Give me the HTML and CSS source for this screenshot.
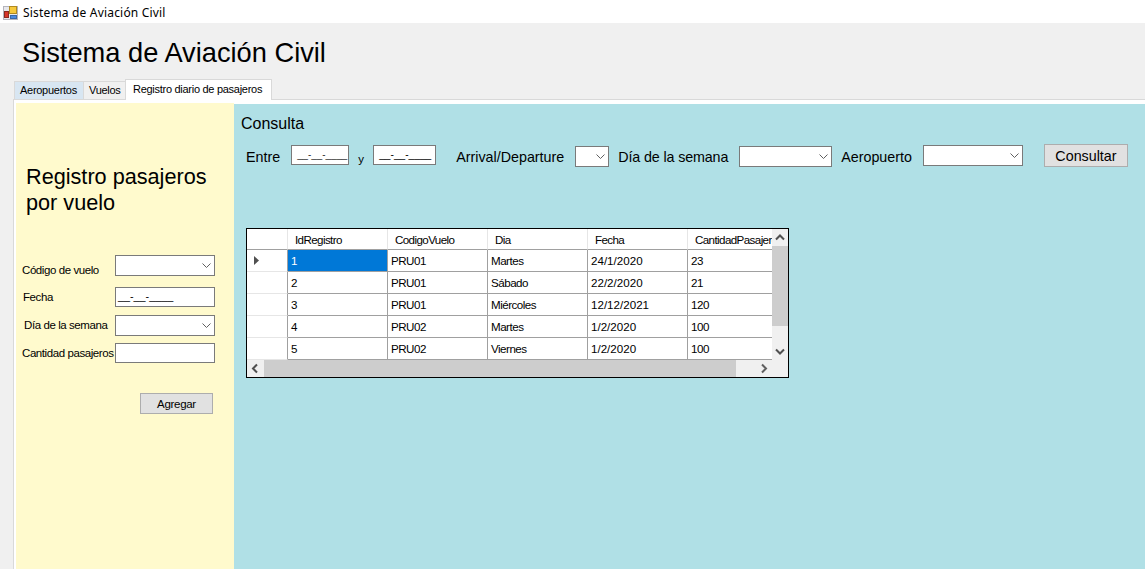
FILE: index.html
```html
<!DOCTYPE html>
<html lang="es">
<head>
<meta charset="UTF-8">
<title>Sistema de Aviación Civil</title>
<link rel="stylesheet" href="styles.css">
</head>
<body>
<div class="titlebar">
    <svg class="appicon" width="16" height="16" viewBox="0 0 16 16">
        <rect x="0.5" y="1.5" width="14" height="13" fill="#e8e8ec" stroke="#b4b4bc"/>
        <rect x="6.5" y="1.5" width="7" height="7" fill="#f6c93c" stroke="#b08a20"/>
        <rect x="1.5" y="6.5" width="4" height="6" fill="#d8362a" stroke="#8a2a20"/>
        <rect x="7.5" y="10.5" width="6" height="3" fill="#4a8ae0" stroke="#3a68a8"/>
    </svg>
    <span>Sistema de Aviación Civil</span>
</div>
<h1 class="apptitle">Sistema de Aviación Civil</h1>
<div class="tabs">
    <div class="tab tab-blue">Aeropuertos</div>
    <div class="tab tab-vuelos">Vuelos</div>
    <div class="tab tab-active">Registro diario de pasajeros</div>
</div>
<div class="panel">
    <div class="side">
        <h2 class="side-title">Registro pasajeros<br>por vuelo</h2>
        <div class="side-form">
            <div class="side-row row-a"><label class="lbl lbl-codigo">Código de vuelo</label><div class="combo side-field"><svg class="chev" width="9" height="5" viewBox="0 0 9 5"><path d="M0.5 0.5L4.5 4.5L8.5 0.5" fill="none" stroke="#606060"/></svg></div></div>
            <div class="side-row row-b"><label class="lbl lbl-fecha">Fecha</label><div class="field side-field mask">__-__-____</div></div>
            <div class="side-row row-c"><label class="lbl lbl-dia">Día de la semana</label><div class="combo side-field"><svg class="chev" width="9" height="5" viewBox="0 0 9 5"><path d="M0.5 0.5L4.5 4.5L8.5 0.5" fill="none" stroke="#606060"/></svg></div></div>
            <div class="side-row row-d"><label class="lbl">Cantidad pasajeros</label><div class="field side-field"></div></div>
        </div>
        <button class="btn btn-add">Agregar</button>
    </div>
    <div class="main">
        <div class="main-title">Consulta</div>
        <div class="filters">
            <span class="f-entre">Entre</span>
            <div class="field date1 mask">__-__-____</div>
            <span class="f-y">y</span>
            <div class="field date2 mask">__-__-____</div>
            <span class="f-arrival">Arrival/Departure</span>
            <div class="combo c-arrival"><svg class="chev" width="9" height="5" viewBox="0 0 9 5"><path d="M0.5 0.5L4.5 4.5L8.5 0.5" fill="none" stroke="#606060"/></svg></div>
            <span class="f-dia">Día de la semana</span>
            <div class="combo c-dia"><svg class="chev" width="9" height="5" viewBox="0 0 9 5"><path d="M0.5 0.5L4.5 4.5L8.5 0.5" fill="none" stroke="#606060"/></svg></div>
            <span class="f-aero">Aeropuerto</span>
            <div class="combo c-aero"><svg class="chev" width="9" height="5" viewBox="0 0 9 5"><path d="M0.5 0.5L4.5 4.5L8.5 0.5" fill="none" stroke="#606060"/></svg></div>
            <button class="btn btn-query">Consultar</button>
        </div>
        <div class="grid">
            <div class="grid-top">
                <div class="grid-view">
                    <table>
                        <tr><th class="rowhead"></th><th>IdRegistro</th><th>CodigoVuelo</th><th>Dia</th><th>Fecha</th><th>CantidadPasajeros</th></tr>
                        <tr><td class="rowhead"><svg width="5" height="9" viewBox="0 0 5 9"><path d="M0 0L5 4.5L0 9Z" fill="#505050"/></svg></td><td class="selected">1</td><td>PRU01</td><td>Martes</td><td class="num">24/1/2020</td><td>23</td></tr>
                        <tr><td class="rowhead"></td><td>2</td><td>PRU01</td><td>Sábado</td><td class="num">22/2/2020</td><td>21</td></tr>
                        <tr><td class="rowhead"></td><td>3</td><td>PRU01</td><td>Miércoles</td><td class="num">12/12/2021</td><td>120</td></tr>
                        <tr><td class="rowhead"></td><td>4</td><td>PRU02</td><td>Martes</td><td class="num">1/2/2020</td><td>100</td></tr>
                        <tr><td class="rowhead"></td><td>5</td><td>PRU02</td><td>Viernes</td><td class="num">1/2/2020</td><td>100</td></tr>
                    </table>
                </div>
                <div class="vbar">
                    <svg class="arrow" width="16" height="17" viewBox="0 0 16 17"><path d="M4 10.5L8 6.5L12 10.5" fill="none" stroke="#505050" stroke-width="2"/></svg>
                    <div class="vtrack"><div class="vthumb"></div></div>
                    <svg class="arrow" width="16" height="17" viewBox="0 0 16 17"><path d="M4 6.5L8 10.5L12 6.5" fill="none" stroke="#505050" stroke-width="2"/></svg>
                </div>
            </div>
            <div class="hbar">
                <svg class="arrow" width="17" height="17" viewBox="0 0 17 17"><path d="M10 4.5L6 8.5L10 12.5" fill="none" stroke="#505050" stroke-width="2"/></svg>
                <div class="htrack"><div class="hthumb"></div></div>
                <svg class="arrow" width="17" height="17" viewBox="0 0 17 17"><path d="M7 4.5L11 8.5L7 12.5" fill="none" stroke="#606060" stroke-width="2"/></svg>
                <div class="corner"></div>
            </div>
        </div>
    </div>
</div>
</body>
</html>
```

FILE: styles.css
```css
html, body {
    margin: 0;
    height: 100%;
    overflow: hidden;
}
body {
    background-color: #f0f0f0;
    font-family: "Liberation Sans", Arial, sans-serif;
    color: #000;
    display: flex;
    flex-direction: column;
}
.titlebar {
    box-sizing: border-box;
    height: 23px;
    background-color: #fff;
    display: flex;
    align-items: center;
    font-family: "Noto Sans", "Liberation Sans", sans-serif;
    font-size: 12px;
    padding: 2px 0 0 3px;
    flex: none;
}
.titlebar span {
    margin-left: 4px;
    letter-spacing: 0.18px;
}
.appicon {
    flex: none;
}
.apptitle {
    margin: 0;
    padding: 15px 0 0 22px;
    height: 41px;
    font-size: 27.25px;
    line-height: 30px;
    font-weight: normal;
    flex: none;
}
.tabs {
    display: flex;
    align-items: flex-end;
    height: 20px;
    padding-left: 14px;
    font-size: 11px;
    letter-spacing: -0.28px;
    position: relative;
    z-index: 1;
    flex: none;
}
.tab {
    box-sizing: border-box;
    height: 18px;
    line-height: 17px;
    border: 1px solid #d9d9d9;
    border-bottom: 0;
    background-color: #f0f0f0;
    white-space: nowrap;
}
.tab-blue {
    width: 70px;
    padding-left: 5px;
    background-color: #d8e6f2;
}
.tab-vuelos {
    width: 43px;
    margin-left: -1px;
    padding-left: 5px;
}
.tab-active {
    width: 147px;
    height: 21px;
    line-height: 18px;
    margin-left: -1px;
    margin-bottom: -1px;
    padding-left: 7px;
    background-color: #fff;
}
.panel {
    flex: 1;
    display: flex;
    margin-left: 13px;
    background-color: #fff;
    border-left: 1px solid #d9d9d9;
    border-top: 1px solid #d9d9d9;
    padding: 3px 0 0 2px;
    min-height: 0;
}
.side {
    width: 218px;
    background-color: #fffacd;
    flex: none;
    font-size: 12px;
}
.side-title {
    margin: 0;
    padding: 61px 0 0 10px;
    font-size: 21.66px;
    line-height: 26px;
    font-weight: normal;
}
.side-form {
    margin-top: 39px;
    display: flex;
    flex-direction: column;
}
.side-row {
    display: flex;
    align-items: flex-start;
    padding-left: 6px;
}
.row-a { height: 21px; margin-bottom: 11px; }
.row-b { height: 20px; margin-bottom: 8px; }
.row-c { height: 21px; margin-bottom: 7px; }
.row-d { height: 20px; }
.lbl {
    box-sizing: border-box;
    width: 93px;
    flex: none;
    margin-top: 3px;
    line-height: 14px;
    white-space: nowrap;
    font-size: 11.5px;
    letter-spacing: -0.42px;
}
.lbl-codigo { margin-top: 8px; }
.lbl-fecha { padding-left: 1px; }
.lbl-dia { padding-left: 2px; }
.side-field {
    width: 100px;
}
.field, .combo {
    box-sizing: border-box;
    background-color: #fff;
    border: 1px solid #7a7a7a;
    flex: none;
}
.field {
    height: 20px;
}
.combo {
    height: 21px;
    display: flex;
    align-items: center;
    justify-content: flex-end;
    padding-right: 3px;
}
.mask {
    font-size: 10.8px;
    line-height: 17px;
    padding-left: 2px;
    white-space: nowrap;
    overflow: hidden;
}
.btn {
    box-sizing: border-box;
    font-family: inherit;
    background-color: #e1e1e1;
    border: 1px solid #adadad;
    padding: 0;
    color: #000;
}
.btn-add {
    display: block;
    margin: 30px 0 0 124px;
    width: 73px;
    height: 21px;
    font-size: 11.5px;
    letter-spacing: -0.3px;
}
.main {
    flex: 1;
    background-color: #b0e0e6;
    margin-top: 1px;
    min-width: 0;
    font-size: 14.3px;
}
.main-title {
    padding: 10px 0 0 7px;
    font-size: 16px;
    line-height: 20px;
}
.filters {
    display: flex;
    align-items: center;
    height: 23px;
    margin-top: 11px;
    padding-left: 12px;
    white-space: nowrap;
}
.date1 { width: 58px; margin-left: 11px; margin-bottom: 3px; font-size: 9.8px; padding-left: 5px; }
.f-y { width: 6px; margin-left: 9px; font-size: 11.5px; margin-top: 4px; }
.date2 { width: 63px; margin-left: 9px; margin-bottom: 3px; font-size: 10.2px; padding-left: 5px; }
.f-arrival { margin-left: 20px; }
.c-arrival { width: 34px; margin-left: 11px; }
.f-dia { margin-left: 9px; letter-spacing: -0.13px; }
.c-dia { width: 93px; margin-left: 11px; }
.f-aero { margin-left: 9px; }
.c-aero { width: 100px; margin-left: 11px; margin-bottom: 2px; }
.btn-query {
    width: 84px;
    height: 23px;
    margin-left: 21px;
    margin-bottom: 2px;
    font-size: 14.3px;
}
.grid {
    box-sizing: border-box;
    width: 543px;
    height: 150px;
    margin: 60px 0 0 12px;
    border: 1px solid #000;
    background-color: #fff;
    display: flex;
    flex-direction: column;
    font-size: 11.6px;
}
.grid-top {
    display: flex;
    height: 131px;
    flex: none;
}
.grid-view {
    width: 525px;
    overflow: hidden;
    flex: none;
}
table {
    border-collapse: separate;
    border-spacing: 0;
    table-layout: fixed;
    width: 541px;
}
th, td {
    box-sizing: border-box;
    width: 100px;
    height: 22px;
    padding: 0 0 0 3px;
    border-right: 1px solid #a0a0a0;
    border-bottom: 1px solid #a0a0a0;
    text-align: left;
    font-weight: normal;
    white-space: nowrap;
    overflow: hidden;
    letter-spacing: -0.5px;
}
th {
    height: 21px;
    padding-left: 7px;
    border-right: 1px solid #e6e6e6;
    letter-spacing: -0.6px;
}
td.num {
    letter-spacing: 0;
}
td.rowhead, th.rowhead {
    width: 41px;
    padding: 0 0 0 7px;
}
td.rowhead {
    border-bottom-color: #e6e6e6;
}
.selected {
    background-color: #0078d7;
    color: #fff;
}
.vbar {
    width: 16px;
    background-color: #f0f0f0;
    display: flex;
    flex-direction: column;
    flex: none;
}
.arrow {
    display: block;
    flex: none;
}
.vtrack {
    flex: 1;
}
.vthumb {
    height: 80px;
    background-color: #cdcdcd;
}
.hbar {
    display: flex;
    flex: 1;
    background-color: #f0f0f0;
}
.htrack {
    width: 491px;
    flex: none;
}
.hthumb {
    width: 472px;
    height: 100%;
    background-color: #cdcdcd;
}
.corner {
    flex: 1;
}
```
